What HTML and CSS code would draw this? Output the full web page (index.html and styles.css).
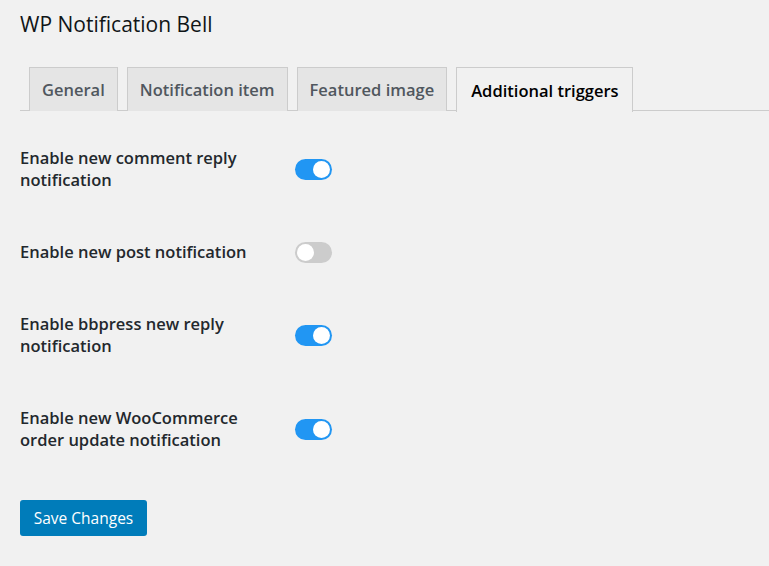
FILE: index.html
```html
<!DOCTYPE html>
<html>
<head>
<meta charset="utf-8">
<link rel="stylesheet" href="styles.css">
</head>
<body>
<div class="wrap">
  <h1 class="title">WP Notification Bell</h1>
  <nav class="tabs">
    <a class="tab">General</a>
    <a class="tab">Notification item</a>
    <a class="tab">Featured image</a>
    <a class="tab tab-active">Additional triggers</a>
  </nav>
  <div class="form">
    <div class="row">
      <div class="label">Enable new comment reply notification</div>
      <div class="field"><span class="switch on"><span class="knob"></span></span></div>
    </div>
    <div class="row">
      <div class="label">Enable new post notification</div>
      <div class="field"><span class="switch"><span class="knob"></span></span></div>
    </div>
    <div class="row">
      <div class="label">Enable bbpress new reply notification</div>
      <div class="field"><span class="switch on"><span class="knob"></span></span></div>
    </div>
    <div class="row">
      <div class="label">Enable new WooCommerce order update notification</div>
      <div class="field"><span class="switch on"><span class="knob"></span></span></div>
    </div>
  </div>
  <button class="btn">Save Changes</button>
</div>
</body>
</html>
```
FILE: styles.css
```css
html, body {
  margin: 0;
  padding: 0;
  background: #f1f1f1;
}
body {
  font-family: "Open Sans", "Noto Sans", sans-serif;
  color: #23282d;
}
.wrap {
  padding: 9px 0 0 20px;
}
.title {
  margin: 0;
  font-size: 21px;
  font-weight: 400;
  line-height: 30px;
  color: #101517;
}
.tabs {
  display: flex;
  gap: 9px;
  margin-top: 28px;
  padding-left: 9px;
  border-bottom: 1px solid #ccc;
  height: 44px;
  box-sizing: border-box;
}
.tab {
  display: flex;
  align-items: center;
  box-sizing: border-box;
  height: 44px;
  padding: 0 12px;
  border: 1px solid #ccc;
  border-bottom: none;
  background: #e5e5e5;
  color: #50575e;
  font-size: 16.5px;
  font-weight: 600;
  white-space: nowrap;
}
.tab-active {
  background: #f1f1f1;
  color: #000;
  height: 45px;
  margin-bottom: -1px;
  padding: 0 13.5px 0 14px;
}
.form {
  padding-top: 11px;
}
.row {
  display: flex;
  align-items: center;
  padding: 25px 0;
}
.label {
  width: 255px;
  margin-right: 20px;
  font-size: 16.5px;
  font-weight: 600;
  line-height: 22px;
  color: #23282d;
}
.field {
  display: flex;
}
.switch {
  position: relative;
  display: block;
  width: 37px;
  height: 21px;
  border-radius: 11px;
  background: #ccc;
}
.switch.on {
  background: #2196f3;
}
.knob {
  position: absolute;
  top: 2px;
  left: 2px;
  width: 17px;
  height: 17px;
  border-radius: 50%;
  background: #fff;
}
.switch.on .knob {
  left: 18px;
}
.btn {
  display: block;
  margin-top: 24px;
  width: 127px;
  height: 36px;
  padding: 0;
  border: none;
  border-radius: 3px;
  background: #007cba;
  color: #fff;
  font-family: "Open Sans", "Noto Sans", sans-serif;
  font-size: 15.5px;
  font-weight: 400;
}
```
